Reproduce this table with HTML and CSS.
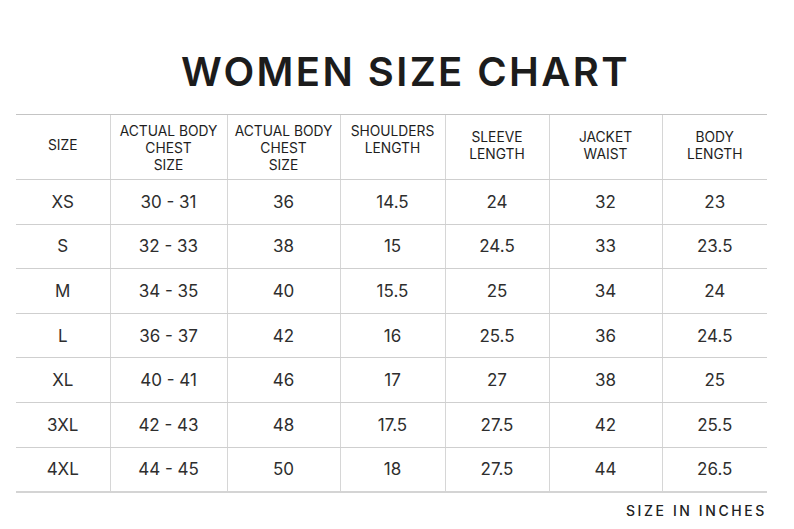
FILE: index.html
```html
<!DOCTYPE html>
<html lang="en">
<head>
<meta charset="utf-8">
<title>Women Size Chart</title>
<link rel="stylesheet" href="styles.css">
</head>
<body>
<main class="page">
  <h1 class="title">WOMEN SIZE CHART</h1>
  <table class="chart">
    <colgroup>
      <col class="c1"><col class="c2"><col class="c3"><col class="c4"><col class="c5"><col class="c6"><col class="c7">
    </colgroup>
    <thead>
      <tr>
        <th class="raised">SIZE</th>
        <th class="lowered">ACTUAL BODY<br>CHEST<br>SIZE</th>
        <th class="lowered">ACTUAL BODY<br>CHEST<br>SIZE</th>
        <th class="top">SHOULDERS<br>LENGTH</th>
        <th class="raised">SLEEVE<br>LENGTH</th>
        <th class="raised">JACKET<br>WAIST</th>
        <th class="raised">BODY<br>LENGTH</th>
      </tr>
    </thead>
    <tbody>
      <tr><td>XS</td><td>30 - 31</td><td>36</td><td>14.5</td><td>24</td><td>32</td><td>23</td></tr>
      <tr><td>S</td><td>32 - 33</td><td>38</td><td>15</td><td>24.5</td><td>33</td><td>23.5</td></tr>
      <tr><td>M</td><td>34 - 35</td><td>40</td><td>15.5</td><td>25</td><td>34</td><td>24</td></tr>
      <tr><td>L</td><td>36 - 37</td><td>42</td><td>16</td><td>25.5</td><td>36</td><td>24.5</td></tr>
      <tr><td>XL</td><td>40 - 41</td><td>46</td><td>17</td><td>27</td><td>38</td><td>25</td></tr>
      <tr><td>3XL</td><td>42 - 43</td><td>48</td><td>17.5</td><td>27.5</td><td>42</td><td>25.5</td></tr>
      <tr><td>4XL</td><td>44 - 45</td><td>50</td><td>18</td><td>27.5</td><td>44</td><td>26.5</td></tr>
    </tbody>
  </table>
  <p class="note">SIZE IN INCHES</p>
</main>
</body>
</html>
```

FILE: styles.css
```css
html, body {
  margin: 0;
  padding: 0;
  background: #ffffff;
}

body {
  font-family: Inter, "Liberation Sans", sans-serif;
  color: #2b2b2b;
}

.page {
  width: 794px;
  height: 529px;
  padding: 0 27px 0 16px;
  box-sizing: border-box;
  display: flex;
  flex-direction: column;
}

.title {
  margin: 0;
  padding: 52px 0 0 28px;
  height: 62px;
  line-height: 40px;
  font-size: 40px;
  font-weight: 600;
  letter-spacing: 2.4px;
  text-align: center;
  color: #1c1c1c;
}

.chart {
  width: 751px;
  border-collapse: collapse;
  table-layout: fixed;
}

.c1 { width: 94px; }
.c2 { width: 117px; }
.c3 { width: 113px; }
.c4 { width: 105px; }
.c5 { width: 104px; }
.c6 { width: 113px; }
.c7 { width: 105px; }

.chart th,
.chart td {
  border-top: 1px solid #cfcfcf;
  border-bottom: 1px solid #cfcfcf;
  border-left: 1px solid #d6d6d6;
  padding: 0;
  text-align: center;
  vertical-align: middle;
}

.chart th:first-child,
.chart td:first-child {
  border-left: none;
}

.chart thead th {
  border-top: 1px solid #c4c4c4;
  height: 64px;
  font-size: 13.8px;
  line-height: 17px;
  font-weight: 400;
  color: #1e1e1e;
}

.chart thead th.raised {
  height: 61px;
  padding-bottom: 3px;
}

.chart thead th.lowered {
  height: 62px;
  padding-top: 2px;
}

.chart thead th.top {
  vertical-align: top;
  padding-top: 8px;
  height: 56px;
}

.chart td {
  height: 43.6px;
  font-size: 17px;
  font-weight: 400;
  color: #2e2e2e;
}

.chart tbody tr:last-child td {
  border-bottom: 2px solid #d4d4d4;
}

.note {
  margin: 10px 0 0;
  width: 751px;
  text-align: right;
  font-size: 14px;
  font-weight: 500;
  letter-spacing: 2.6px;
  color: #222;
  line-height: 16px;
}
```
